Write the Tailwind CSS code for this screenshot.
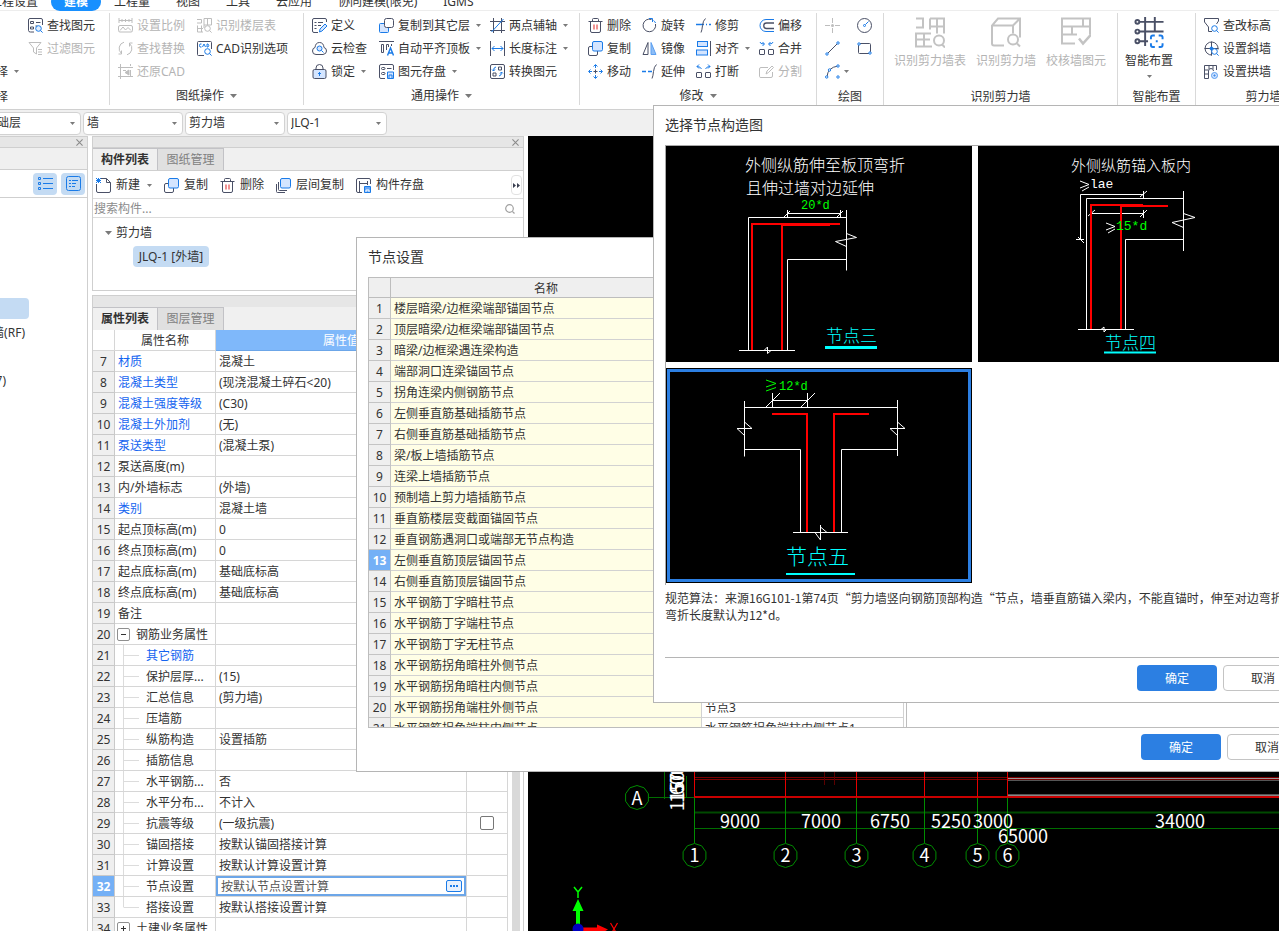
<!DOCTYPE html>
<html lang="zh-CN">
<head>
<meta charset="utf-8">
<title>建模</title>
<script src="https://cdn.jsdelivr.net/npm/@tailwindcss/browser@4"></script>
</head>
<body class="h-screen overflow-hidden bg-white font-['Noto_Sans','Noto_Sans_CJK_SC',sans-serif] text-xs leading-4 text-[#333]">

<svg class="hidden" aria-hidden="true">
  <defs>
    <g id="mag"><circle cx="10.5" cy="10.5" r="2.8"/><path d="M12.6 12.6l2 2"/></g>
  </defs>
  <symbol id="find" viewBox="0 0 15 15"><path d="M6 14H2.500Q.5 14 .5 12.500V2Q.5.5 2 .5H13Q14.500.5 14.500 2V7M2.500 3.500h3v2h-3zM8 4.500h4.500M2.500 9h3v2h-3zM7.500 8h2" fill="none" stroke="#4a5066"/><use href="#mag" fill="#e3efff" stroke="#1a7be8"/></symbol>
  <symbol id="filter" viewBox="0 0 15 15" fill="none" stroke="#bdbdbd"><path d="M1 1.500H13L8.500 7V13L5.500 11V7zM10 8.500h4M10 11h4M10 13.500h4"/></symbol>
  <symbol id="scale" viewBox="0 0 15 15" fill="none" stroke="#bdbdbd"><path d="M1 0V5M14 0V5M1 2.500H14M4 1v3M7.500 1v3M11 1v3M2 7.500h11q1.500 0 1.500 1.500v3.500q0 1.500-1.500 1.500H2Q.5 14 .5 12.500V9Q.5 7.500 2 7.500zM2 12.500l3-3.500 2.500 3L10 9.500l3 3"/></symbol>
  <symbol id="swap" viewBox="0 0 15 15" fill="none" stroke="#bdbdbd"><path d="M6 1.200A6.500 6.500 0 0 0 3.500 12.500M3.500 9.500v3.500H.5M9 13.800A6.500 6.500 0 0 0 11.500 2.500M11.500 5.500V2h3"/></symbol>
  <symbol id="restore" viewBox="0 0 15 15" fill="none" stroke="#bdbdbd"><path d="M2.500 0V15M0 3.500H15M0 12.500H15M12.500 0v2M12.500 6v6M5 6.500h3"/><path d="M11 6v5L7 8.500z" fill="#bdbdbd"/></symbol>
  <symbol id="floor" viewBox="0 0 15 15" fill="none" stroke="#bdbdbd"><path d="M0 1.500H4.500V5H0M7 .5h7.500V7H7zM10.500.5V7M.5 7.500V14H6M.5 10.500H6M4.500 7.500V14M7 7v3"/><use href="#mag"/></symbol>
  <symbol id="cad" viewBox="0 0 15 15"><path d="M7 14.500H1.500Q.5 14.500.5 13.500V1.500Q.5.5 1.500.5H13.500Q14.500.5 14.500 1.500V8" fill="none" stroke="#4a5066"/><path d="M4.500 3H3Q2 4.500 3 6H4.500M5.500 6L7 3 8.500 6M10 3v3h1Q12.500 4.500 11 3z" fill="none" stroke="#1a7be8"/><use href="#mag" fill="#fff" stroke="#1a7be8"/></symbol>
  <symbol id="define" viewBox="0 0 15 15" fill="none" stroke="#4a5066"><path d="M6 14.500H2Q.5 14.500.5 13V2Q.5.5 2 .5H13Q14.500.5 14.500 2V4M2.500 4.500h2M6 4.500h5M2.500 7.500h2M6 7.500h3M2.500 10.500h2"/><path d="M7.500 14l.5-3 5-5 2 2-5 5z" fill="#d4e5ff" stroke="#1a7be8"/></symbol>
  <symbol id="cloud" viewBox="0 0 15 15" fill="none" stroke="#4a5066"><path d="M4 13.500Q.5 13.500.5 10 .5 7 3 6.500 3.500 1.500 7.500 1.500T12 6.500Q14.500 7 14.500 10T11 13.500z"/><g stroke="#1a7be8"><circle cx="7.500" cy="7.500" r="2.500" fill="#d4e5ff"/><path d="M9.500 9.500l2 2"/></g></symbol>
  <symbol id="lock" viewBox="0 0 15 15" fill="none" stroke="#4a5066"><path d="M4 5.500V4a3.500 3.500 0 0 1 7 0V5.500"/><rect x="1" y="5.500" width="13" height="9" rx="1.500" fill="#d4e5ff"/><path d="M7.500 8v4M6 9.500h3" stroke="#1a7be8"/></symbol>
  <symbol id="copy" viewBox="0 0 15 15"><rect x=".5" y="5.500" width="9" height="9" rx="1.500" fill="#fff" stroke="#4a5066"/><rect x="4.500" y=".5" width="10" height="9.500" rx="1.500" fill="#d4e5ff" stroke="#1a7be8"/></symbol>
  <symbol id="copyup" viewBox="0 0 15 15"><rect x=".5" y="5.500" width="9" height="9" rx="1" fill="#d4e5ff" stroke="#1a7be8"/><rect x="5.500" y=".5" width="9" height="9" rx="2" fill="#fff" stroke="#4a5066"/></symbol>
  <symbol id="copylayer" viewBox="0 0 15 15" fill="none" stroke="#4a5066"><path d="M.5 6V13.500Q.5 14.500 1.500 14.500H9M2.500 4V11.500Q2.500 12.500 3.500 12.500H11"/><rect x="4.500" y=".5" width="10" height="9.500" rx="1.500" fill="#d4e5ff" stroke="#1a7be8"/></symbol>
  <symbol id="align" viewBox="0 0 15 15" fill="none" stroke="#4a5066"><path d="M0 .5H15M2.500 3.500h2V11.500h-2zM7.500 9V3.500h2V6M12.500 3v2"/><path d="M8.500 14.500L11.500 7l3 7.500M9.500 12h4" stroke="#1a7be8" stroke-width="1.400"/></symbol>
  <symbol id="store" viewBox="0 0 15 15" fill="none" stroke="#4a5066"><path d="M6 14.500H2Q.5 14.500.5 13V2Q.5.5 2 .5H13Q14.500.5 14.500 2V6M8 4.500h4.500"/><rect x="2.500" y="3.500" width="3.500" height="2" rx="1"/><rect x="2.500" y="8.500" width="3.500" height="2" rx="1"/><path d="M8.500 8h6v6.500h-6zM10 14v-3h3v3" stroke="#1a7be8" fill="#d4e5ff"/></symbol>
  <symbol id="axis" viewBox="0 0 15 15" fill="none" stroke="#4a5066"><path d="M3.500 0V15M0 3.500H15M0 12.500H15M11.500 0V15"/><path d="M1.500 14L13.500 1" stroke="#1a7be8"/></symbol>
  <symbol id="length" viewBox="0 0 15 15" fill="none" stroke="#4a5066"><path d="M.5 0V15M14.500 0V15"/><path d="M2 7.500H13M4.500 5L2 7.500 4.500 10M10.500 5L13 7.500 10.500 10" stroke="#1a7be8"/></symbol>
  <symbol id="convert" viewBox="0 0 15 15" fill="none" stroke="#4a5066"><rect x=".5" y=".5" width="14" height="14" rx="1.500"/><path d="M8.500 3h3v3h-3zM3 9h3v3H3z"/><path d="M6 3Q3.500 3 3.500 7M2 5.500L3.500 7 5 5.500M9 12q2.500 0 2.500-4M10 9.500L11.500 8 13 9.500" stroke="#1a7be8"/></symbol>
  <symbol id="trash" viewBox="0 0 15 15" fill="none" stroke="#4a5066"><path d="M.5 3.500h14M4.500 3.500V1.500Q4.500.5 5.500.5h4Q10.500.5 10.500 1.500V3.500M2.500 3.500V13Q2.500 14.500 4 14.500h7Q12.500 14.500 12.500 13V3.500"/><path d="M6 6.500v5M9 6.500v5" stroke="#e02424"/></symbol>
  <symbol id="move" viewBox="0 0 15 15" fill="none" stroke="#1a7be8"><path d="M5.500 2.500l2-2 2 2M5.500 12.500l2 2 2-2M2.500 5.500l-2 2 2 2M12.500 5.500l2 2-2 2M7.500 1v3M7.500 11v3M1 7.500h3M11 7.500h3"/><path d="M7.500 5.500v4M5.500 7.500h4" stroke="#4a5066"/></symbol>
  <symbol id="rotate" viewBox="0 0 15 15" fill="none" stroke="#4a5066"><path d="M9.500 1.500A6.300 6.300 0 1 0 13.500 6" /><path d="M7 .5h3.500V4M11.500 2.500q1.500 1 2 2.500" stroke="#1a7be8"/></symbol>
  <symbol id="mirror" viewBox="0 0 15 15"><path d="M6 1.500V13.500H1z" fill="#fff" stroke="#4a5066"/><path d="M9 1.500V13.500H14z" fill="#8dbdf7" stroke="#5b9ff0"/></symbol>
  <symbol id="extend" viewBox="0 0 15 15" fill="none" stroke="#1a7be8"><path d="M0 7.500h4M6 7.500h4" stroke-width="1.300"/><path d="M10 14.500q1-2 1.500-7T14.500.5" stroke="#4a5066"/></symbol>
  <symbol id="trim" viewBox="0 0 15 15" fill="none" stroke="#1a7be8"><path d="M0 6.500h8M10 6.500h1M13 6.500h2" stroke-width="1.300"/><path d="M5 14.500q1-2 1.500-7T9.500.5" stroke="#4a5066"/></symbol>
  <symbol id="alignr" viewBox="0 0 15 15"><rect x="1.500" y=".5" width="10" height="5" fill="#d4e5ff" stroke="#1a7be8"/><rect x=".5" y="9" width="11" height="5" fill="#d4e5ff" stroke="#1a7be8"/><path d="M14.500 0V15" stroke="#4a5066"/></symbol>
  <symbol id="break" viewBox="0 0 15 15" fill="none" stroke="#4a5066"><rect x=".5" y="8.500" width="5" height="5" rx=".5"/><rect x="9.500" y="8.500" width="5" height="5" rx=".5"/><path d="M5.500 5Q4.500 2.500 1 2.500M3 .5l-2 2 2 2M9.500 5q1-2.500 4.500-2.500M12 .5l2 2-2 2" stroke="#1a7be8"/></symbol>
  <symbol id="merge" viewBox="0 0 15 15" fill="none" stroke="#4a5066"><rect x=".5" y="8.500" width="5" height="5" rx=".5"/><rect x="9.500" y="8.500" width="5" height="5" rx=".5"/><path d="M1 1q0 2 4 2M3.500 1l2 2-2 2M14 1q0 2-4 2M11.500 1l-2 2 2 2" stroke="#1a7be8"/></symbol>
  <symbol id="offset" viewBox="0 0 15 15" fill="none"><path d="M15 1.500H7A6 6 0 0 0 7 13.500H15" stroke="#1a7be8"/><path d="M15 5H7.500a2.700 2.700 0 0 0 0 5.500H15" stroke="#4a5066" stroke-width="1.300"/></symbol>
  <symbol id="split" viewBox="0 0 15 15" fill="none" stroke="#bdbdbd"><path d="M9 3.500H2Q.5 3.500.5 5v7.500Q.5 13.500 2 13.500H12Q13.500 13.500 13.500 12V8M7 10l1-3 5-5 1.500 1.500-5 5z"/></symbol>
  <symbol id="point" viewBox="0 0 15 15"><path d="M7.500 0v5M7.500 10v5M0 7.500h5M10 7.500h5" stroke="#bdbdbd"/><circle cx="7.500" cy="7.500" r="1.500" fill="#bdbdbd"/></symbol>
  <symbol id="circle" viewBox="0 0 15 15" fill="none" stroke="#4a5066"><circle cx="7.500" cy="7.500" r="7"/><g stroke="#1a7be8"><circle cx="7.500" cy="7.500" r="1"/><path d="M8.500 6.500l3-3"/></g></symbol>
  <symbol id="line" viewBox="0 0 15 15" fill="none"><path d="M2 13L13 2" stroke="#4a5066"/><g stroke="#1a7be8" fill="#fff"><circle cx="2" cy="13" r="1.200"/><circle cx="13" cy="2" r="1.200"/></g></symbol>
  <symbol id="rect" viewBox="0 0 15 15" fill="none"><rect x="1.500" y="2.500" width="12" height="10" rx="1" stroke="#4a5066"/><g stroke="#1a7be8" fill="#fff"><circle cx="2" cy="3" r="1.200"/><circle cx="13" cy="12" r="1.200"/></g></symbol>
  <symbol id="arc" viewBox="0 0 15 15" fill="none"><path d="M2 13Q2.500 3.500 13 2" stroke="#4a5066"/><g stroke="#1a7be8" fill="#fff"><circle cx="1.700" cy="13" r="1.200"/><circle cx="4.500" cy="6" r="1.200"/><circle cx="13" cy="2" r="1.200"/><circle cx="13" cy="13" r="1.200"/></g></symbol>
  <symbol id="big1" viewBox="0 0 30 30" fill="none" stroke="#c3c3c3" stroke-width="2"><path d="M1 1H8V10H1M15 1H29V16M15 1V12M15 9H29M22 1V16M1 15V29H17M1 22H15M9 15V29M1 16H16"/><circle cx="24" cy="23" r="5"/><path d="M27 27l3 3"/></symbol>
  <symbol id="big2" viewBox="0 0 30 30" fill="none" stroke="#c3c3c3" stroke-width="2"><path d="M13 28H3Q1 28 1 26V8L7 1H29V20M1 8H22V16M22 8L29 1"/><circle cx="22" cy="22" r="5"/><path d="M26 26l3 3"/></symbol>
  <symbol id="big3" viewBox="0 0 30 30" fill="none" stroke="#c3c3c3" stroke-width="2"><path d="M14 26H1V1H29V17M1 9H29M1 17H16M22 1V9M11 9V17"/><path d="M18 21l4 5 8-9" stroke-width="2.500"/></symbol>
  <symbol id="big4" viewBox="0 0 30 32" fill="none" stroke="#4a5066" stroke-width="2"><path d="M5 5H30M5 15H30M5 25H14M11 0V30M21 0V15"/><g fill="#fff"><circle cx="3" cy="5" r="2"/><circle cx="3" cy="15" r="2"/><circle cx="3" cy="25" r="2"/></g><path d="M17 23V21Q17 19 19 19H21M25 19H27Q29 19 29 21V23M29 27V29Q29 31 27 31H25M21 31H19Q17 31 17 29V27M22 25h2" stroke="#1a7be8"/></symbol>
  <symbol id="elev" viewBox="0 0 15 15" fill="none" stroke="#4a5066"><path d="M8 13.500H4.500V9L.5 4V.5H14.500V3L12.500 6"/><use href="#mag" stroke="#1a7be8"/></symbol>
  <symbol id="slope" viewBox="0 0 15 15" fill="none" stroke="#4a5066"><path d="M14 8.500A6.500 6.500 0 1 0 8 14M.5 7.500h14M7.500.5v14"/><circle cx="7.500" cy="7.500" r="1.500" fill="#1a7be8" stroke="#1a7be8"/><use href="#mag" fill="#fff" stroke="#1a7be8"/></symbol>
  <symbol id="arch" viewBox="0 0 15 15" fill="none" stroke="#4a5066"><path d="M.5 14.500V1.500H12.500V6M.5 14.500H4.500V7Q4.500 4.500 7 4.500T9.500 7M.5 6h4M.5 10h4M5 1.500V5M9 1.500V5"/><circle cx="10.500" cy="11.500" r="3" fill="#cfe2ff" stroke="#5b9ff0"/><circle cx="10.500" cy="11.500" r=".6" stroke="#1a7be8"/></symbol>
  <symbol id="new" viewBox="0 0 15 15" fill="none"><path d="M5 .5H10.500L14.500 4.500V13Q14.500 14.500 13 14.500H2Q.5 14.500.5 13V6M10.500.5V4.500H14.500" stroke="#4a5066"/><path d="M0 0l5 5M5 0L0 5M2.500 0v5M0 2.500h5" stroke="#1a7be8"/></symbol>
  <symbol id="compstore" viewBox="0 0 15 15" fill="none" stroke="#4a5066"><path d="M6 14.500H2Q.5 14.500.5 13V2Q.5.5 2 .5H13Q14.500.5 14.500 2V6M3.500 3V14M11.500 3V7M3.500 5.500h8"/><path d="M8.500 8.500h6v6h-6z" fill="#6aa8f5" stroke="#1a7be8"/><path d="M10 14v-2h3v2" stroke="#fff"/></symbol>
  <symbol id="caret" viewBox="0 0 7 4"><path d="M0 0H7L3.500 4z" fill="#7a7a7a"/></symbol>
  <symbol id="close" viewBox="0 0 8 8"><path d="M.5.5l7 7M7.500.5l-7 7" stroke="#8a8a8a" stroke-width="1.200"/></symbol>
</svg>

<div class="relative flex h-full flex-col overflow-hidden">
  <nav class="flex h-[11px] shrink-0 items-end overflow-hidden whitespace-nowrap shadow-[inset_0_-1px_#ededed]">
    <div class="-ml-[23px] flex">
      <a href="#" class="h-[18px] px-[13px] leading-[18px]">工程设置</a>
      <a href="#" class="h-[18px] rounded-full bg-[#1890ff] px-[13px] font-bold leading-[18px] text-white">建模</a>
      <a href="#" class="h-[18px] px-[13px] leading-[18px]">工程量</a>
      <a href="#" class="h-[18px] px-[13px] leading-[18px]">视图</a>
      <a href="#" class="h-[18px] px-[13px] leading-[18px]">工具</a>
      <a href="#" class="h-[18px] px-[13px] leading-[18px]">云应用</a>
      <a href="#" class="h-[18px] px-[13px] leading-[18px]">协同建模(限免)</a>
      <a href="#" class="h-[18px] px-[13px] leading-[18px]">IGMS</a>
    </div>
  </nav>

  <div id="ribbon" class="flex h-[99px] shrink-0 border-b border-[#d0d0d0] pt-[2px] whitespace-nowrap"></div>

  <div class="flex h-[26px] shrink-0 items-center gap-0.5 bg-[#f0f0f0]">
    <div id="selectors" class="-ml-[19px] flex gap-0.5"></div>
  </div>

  <main class="flex min-h-0 flex-1 gap-1 bg-white">
    <aside class="flex w-[88px] shrink-0 flex-col overflow-hidden border-r border-[#cfcfcf]">
      <div class="flex h-3 items-center justify-end border-y border-[#cfcfcf] bg-[#e6e6e6] pr-1"><button aria-label="关闭"><svg class="size-[7px]"><use href="#close"/></svg></button></div>
      <div class="h-[22px] border-b border-[#cfcfcf] bg-[#f0f0f0]"></div>
      <div class="flex h-7 items-center justify-end gap-1 border-b border-[#cfcfcf] pr-0.5">
        <button aria-label="列表" class="grid h-[22px] w-6 place-items-center rounded bg-[#c4dbf3]"><svg class="size-[15px]" viewBox="0 0 15 15" fill="none" stroke="#1a7be8"><path d="M5 2.500h10M5 7.500h10M5 12.500h10"/><path d="M.5 1.500h2v2h-2zM.5 6.500h2v2h-2zM.5 11.500h2v2h-2z"/></svg></button>
        <button aria-label="详情" class="grid h-[22px] w-6 place-items-center rounded bg-[#c4dbf3]"><svg class="size-[15px]" viewBox="0 0 15 15" fill="none" stroke="#1a7be8"><rect x=".5" y=".5" width="14" height="14" rx="2"/><path d="M3 4.500h2M6 4.500h6M3 7.500h2M6 7.500h4M3 10.500h2M6 10.500h3"/></svg></button>
      </div>
      <div class="mt-[100px] h-[21px] w-[29px] rounded-r bg-[#c4dbf3]"></div>
      <div class="mt-1.5 flex h-4 w-[25px] justify-end whitespace-nowrap">墙(RF)</div>
      <div class="mt-8 flex h-4 w-[6px] justify-end whitespace-nowrap">7)</div>
    </aside>

    <div class="flex w-[432px] shrink-0 flex-col gap-1">
      <section class="flex h-[155px] shrink-0 flex-col border border-[#cfcfcf]">
        <div class="flex h-[11px] shrink-0 items-center justify-end border-b border-[#cfcfcf] bg-[#e6e6e6] pr-1"><button aria-label="关闭"><svg class="size-[7px]"><use href="#close"/></svg></button></div>
        <div class="flex h-[23px] shrink-0 border-b border-[#cfcfcf] bg-[#f0f0f0]">
          <button class="w-[65px] border-r border-t border-[#c2c2c6] font-bold">构件列表</button>
          <button class="w-[66px] border-r border-t border-[#c2c2c6] bg-[#e0e0e0] text-[#808080]">图纸管理</button>
        </div>
        <div class="flex h-7 shrink-0 items-center gap-3 border-b border-[#dcdcdc] pt-px pl-[3px] whitespace-nowrap">
          <button class="flex items-center gap-[5px]"><svg class="size-[15px]"><use href="#new"/></svg>新建<svg class="ml-0.5 h-[3px] w-[5px]"><use href="#caret"/></svg></button>
          <button class="flex items-center gap-[5px]"><svg class="size-[15px]"><use href="#copy"/></svg>复制</button>
          <button class="flex items-center gap-[5px]"><svg class="size-[15px]"><use href="#trash"/></svg>删除</button>
          <button class="flex items-center gap-[5px]"><svg class="size-[15px]"><use href="#copylayer"/></svg>层间复制</button>
          <button class="flex items-center gap-[5px]"><svg class="size-[15px]"><use href="#compstore"/></svg>构件存盘</button>
          <button aria-label="更多" class="mr-px ml-auto grid h-5 w-[11px] place-items-center rounded border border-[#e2e2e2]"><svg class="h-[5px] w-[7px]" viewBox="0 0 7 5" fill="#3a3f50"><path d="M0 0l3 2.500L0 5zM4 0l3 2.500L4 5z"/></svg></button>
        </div>
        <label class="flex h-[19px] shrink-0 items-center border-b border-[#dcdcdc] pt-px pr-2 pl-px">
          <input type="search" aria-label="搜索构件" placeholder="搜索构件..." class="min-w-0 flex-1 outline-none placeholder:text-[#8c8c8c]">
          <svg class="size-[10px]" viewBox="0 0 10 10" fill="none" stroke="#a0a0a0" stroke-width="1.200"><circle cx="4.500" cy="4.500" r="3.800"/><path d="M7.300 7.300L9.500 9.500"/></svg>
        </label>
        <div class="pt-[7px] pl-3">
          <div class="flex h-4 items-center gap-1"><svg class="h-1 w-[7px]"><use href="#caret"/></svg>剪力墙</div>
          <button class="mt-[5px] ml-7 h-[21px] w-[76px] rounded bg-[#c4dbf3] whitespace-nowrap">JLQ-1 [外墙]</button>
        </div>
      </section>

      <section class="flex min-h-0 flex-1 flex-col border-x border-t border-[#cfcfcf]">
        <div class="h-[11px] shrink-0 bg-[#e6e6e6]"></div>
        <div class="flex h-[23px] shrink-0 bg-[#f0f0f0]">
          <button class="w-[65px] border-r border-t border-[#c2c2c6] font-bold">属性列表</button>
          <button class="w-[66px] border-r border-t border-[#c2c2c6] bg-[#e0e0e0] text-[#808080]">图层管理</button>
        </div>
        <div class="flex min-h-0 flex-1 overflow-hidden">
          <table class="w-[415px] table-fixed border-separate border-spacing-0 self-start">
            <colgroup><col class="w-[22px]"><col class="w-[101px]"><col class="w-[251px]"><col class="w-[41px]"></colgroup>
            <thead><tr class="h-[21px]">
              <th class="border-r border-b border-[#d6d6d6] p-0"></th>
              <th class="border-r border-b border-[#d6d6d6] p-0 pt-[2px] font-normal">属性名称</th>
              <th class="border-r border-b border-[#6ca6e8] bg-[#7fb8fa] p-0 pt-[2px] font-normal text-white">属性值</th>
              <th class="border-r border-b border-[#d6d6d6] p-0 pt-[2px] font-normal">附加</th>
            </tr></thead>
            <tbody id="props"></tbody>
          </table>
          <div class="flex flex-1 justify-center bg-white"><div class="h-full w-2 bg-[#d9d9d9]"></div></div>
        </div>
      </section>
    </div>

    <div class="min-w-0 flex-1 overflow-hidden bg-black">
      <svg class="h-full w-full" aria-label="模型视图">
        <g transform="translate(-528 -136)" fill="none">
          <path d="M694 777.500H2000M694 779.500H2000" stroke="#7a0000"/>
          <path d="M1008 778.500H2000" stroke="#999" />
          <path d="M1008 780.500H2000" stroke="#555"/>
          <path d="M1008 794.500H2000" stroke="#555"/><path d="M1008 795.500H2000" stroke="#888"/>
          <path d="M824.500 765V785M834.500 765V785" stroke="#5a0000"/>
          <path d="M694 797H2000" stroke="#c80000" stroke-width="2"/>
          <path d="M694.500 765V797M785.500 765V797M856.500 765V797M924.500 765V797M977.500 765V797M1007.500 765V797" stroke="#e60000"/>
          <path d="M694 812.500H2000" stroke="#004a00" stroke-width="2"/>
          <path d="M694 828.500H2000M664.500 765V799M686.500 776V797M649 797.500H694" stroke="#006e00"/>
          <path d="M694.500 798V843M785.500 798V843M856.500 798V843M924.500 798V843M977.500 798V843M1007.500 798V843" stroke="#008c00"/>
          <g id="bubbles" stroke="#008c00"></g>
          <g fill="#fff" font-family="Noto Sans CJK SC, sans-serif" font-size="18" text-anchor="middle">
            <text x="637" y="805">A</text>
            <text x="694.500" y="862">1</text><text x="785.500" y="862">2</text><text x="856.500" y="862">3</text><text x="924.500" y="862">4</text><text x="977.500" y="862">5</text><text x="1007.500" y="862">6</text>
            <text x="740" y="828">9000</text><text x="821" y="828">7000</text><text x="890" y="828">6750</text><text x="951" y="828">5250</text><text x="993" y="828">3000</text><text x="1180" y="828">34000</text><text x="1023" y="843">65000</text>
            <g text-anchor="start"><text transform="translate(684 811) rotate(-90)">11500</text><text transform="translate(684 803) rotate(-90)">15700</text><text transform="translate(684 795) rotate(-90)">6000</text></g>
          </g>
          <path d="M578 899l5.500 12h-11zM576 911h4v14h-4z" fill="#0f0"/>
          <path d="M608 929.500l-11-5v11zM583 927.500h14v5h-14z" fill="#f00"/>
          <circle cx="578" cy="929" r="5.500" fill="#0000c0"/>
          <path d="M574 887l4 5 4-5M578 892v6" stroke="#0f0" stroke-width="1.500"/>
          <path d="M610.500 923l7 12M617.500 923l-7 12" stroke="#f00" stroke-width="1.200"/>
        </g>
      </svg>
    </div>
  </main>

  <section role="dialog" aria-label="节点设置" class="absolute top-[237px] -right-[40px] left-[356px] flex h-[535px] flex-col border border-[#b5b5b5] bg-white px-[11px]">
    <h2 class="flex h-[39px] shrink-0 items-center pb-[2px] text-sm">节点设置</h2>
    <div class="flex h-[451px] shrink-0 overflow-hidden border border-[#bdbdbd]">
      <table class="w-[535px] table-fixed border-separate border-spacing-0 self-start">
        <colgroup><col class="w-[22px]"><col class="w-[311px]"><col class="w-[202px]"></colgroup>
        <thead><tr class="h-5 bg-[#efefef]">
          <th class="border-r border-b border-[#bdbdbd] p-0"></th>
          <th class="border-r border-b border-[#bdbdbd] p-0 pt-[2px] font-normal">名称</th>
          <th class="border-r border-b border-[#bdbdbd] p-0 pt-[2px] font-normal">节点图</th>
        </tr></thead>
        <tbody id="nodes"></tbody>
      </table>
      <div class="ml-[2px] flex-1 border-l border-[#bdbdbd]"></div>
    </div>
    <div class="flex justify-end gap-1.5 pt-1.5">
      <button class="h-[26px] w-20 rounded bg-[#2c7fe2] pt-[2px] text-white">确定</button>
      <button class="h-[26px] w-20 rounded border border-[#c4c4c4] bg-white pt-[2px]">取消</button>
    </div>
  </section>

  <section role="dialog" aria-label="选择节点构造图" class="absolute top-[105px] -right-[36px] left-[653px] flex h-[598px] flex-col border border-[#b5b5b5] bg-white px-[11px]">
    <h2 class="flex h-[39px] shrink-0 items-center pb-[2px] text-sm">选择节点构造图</h2>
    <div class="flex h-[440px] shrink-0 flex-wrap content-start gap-x-1.5 gap-y-1.5 border-t border-l border-[#a8a8a8]">
      <button class="h-[216px] w-[306px] bg-black" aria-label="节点三">
        <svg class="block h-[216px] w-[306px]" viewBox="0 0 306 216" fill="none" stroke="#fff">
          <path d="M82.500 204.500V71.500H180.500M180.500 64V124.500M121.500 204.500V113.500H180.500M180.500 87.500L190.500 91.500 169.500 95.500 180.500 100.500M121.500 67.500H174.500M121.500 64V71M174.500 64V71M118 71L124 65M171 71L177 65M73 204.500H129M98 204.500L101.500 201V207.500L105 204.500"/>
          <path d="M86 204V78H174M116 204V79H164" stroke="#f00" stroke-width="2"/>
          <path d="M159 201.500H211" stroke="#0ff" stroke-width="3"/>
          <g stroke="none" fill="#fff" font-family="Noto Sans CJK SC, sans-serif" font-size="16" font-weight="300"><text x="79" y="25">外侧纵筋伸至板顶弯折</text><text x="80" y="48">且伸过墙对边延伸</text>
          <text x="160" y="196" font-size="17" fill="#0ff">节点三</text><text x="135" y="63" fill="#0f0" font-size="12" font-family="Liberation Mono, monospace">20*d</text></g>
        </svg>
      </button>
      <button class="h-[216px] w-[306px] bg-black" aria-label="节点四">
        <svg class="block h-[216px] w-[306px]" viewBox="0 0 306 216" fill="none" stroke="#fff">
          <path d="M108.500 183.500V52.500H205.500M205.500 45V105M147.500 183.500V93.500H205.500M205.500 67.500L217 71.500 194 76.500 205.500 81.500M165.500 48.500H102.500V93.500M165.500 45V52M162 51L169 45M98 93.500H106M100 91L106 97M113 67.500H166M165.500 64V72M162 71L169 64M110 70L117 64M100 183.500H156M123 183.500L126 181V186L129 183"/>
          <path d="M113 183V59H165M143 183V60H190" stroke="#f00" stroke-width="2"/>
          <path d="M126 206.500H178" stroke="#0ff" stroke-width="2"/>
          <g stroke="none" fill="#fff" font-family="Noto Sans CJK SC, sans-serif" font-size="15" font-weight="300"><text x="93" y="25">外侧纵筋锚入板内</text><text x="127" y="203" font-size="17" fill="#0ff">节点四</text></g>
          <g stroke="none" fill="#fff" font-family="Liberation Mono, monospace" font-size="13"><text x="112" y="42">lae</text><text x="138" y="84" fill="#0f0">15*d</text></g>
          <path d="M102 35L111 38.500 102 42M104 45L111 41M128 77L137 80.500 128 84M130 87L137 83"/>
        </svg>
      </button>
      <button class="h-[215px] w-[306px] border border-black bg-black" aria-label="节点五" aria-pressed="true">
        <svg class="block h-[213px] w-[304px] border-[3px] border-[#2c7fe2]" viewBox="4 4 298 207" fill="none" stroke="#fff">
          <path d="M78.500 39.500H231.500M78.500 33V88.500M231.500 32V88M78.500 81.500H134.500V164.500M231.500 81.500H175.500V164.500M78.500 54L86 60.500H71L78.500 67.500M231.500 54L239 60.500H224L231.500 67.500M127 164.500H182M154.500 157V172L149 164.500M154.500 159L161 164.500M106.500 25V39M141.500 25V39M106.500 32.500H141.500M100 39L114 25M135 39L149 25"/>
          <path d="M106 46H141V164M203 46H168V164" stroke="#f00" stroke-width="2"/>
          <path d="M120 206H189" stroke="#0ff" stroke-width="2"/>
          <g stroke="none" font-family="Liberation Mono, monospace"><text x="113" y="22" fill="#0f0" font-size="12">12*d</text><text x="120" y="196" font-size="21" font-weight="300" fill="#0ff" font-family="Noto Sans CJK SC, sans-serif">节点五</text></g>
          <path d="M100 12L110 15.500 100 19M100 23L110 19.500" stroke="#0f0"/>
        </svg>
      </button>
    </div>
    <p class="h-[73px] shrink-0 overflow-hidden border-b border-[#b5b5b5] pt-1 font-['Noto_Sans_CJK_SC',sans-serif] leading-[17px] whitespace-nowrap">规范算法：来源16G101-1第74页“剪力墙竖向钢筋顶部构造“节点，墙垂直筋锚入梁内，不能直锚时，伸至对边弯折，<br>弯折长度默认为12*d。</p>
    <div class="flex justify-end gap-1.5 pt-[7px]">
      <button class="h-[26px] w-20 rounded bg-[#2c7fe2] pt-[2px] text-white">确定</button>
      <button class="h-[26px] w-20 rounded border border-[#c4c4c4] bg-white pt-[2px]">取消</button>
    </div>
  </section>
</div>

<script>
const caret = '<svg class="ml-0.5 h-[3px] w-[5px]"><use href="#caret"/></svg>';
const icon = id => `<svg class="size-[15px] shrink-0"><use href="#${id}"/></svg>`;
// Item: [icon, label, options]; options: d = disabled, c = has a caret, i = icon only
const item = ([id, label, opt = '']) =>
  `<button aria-label="${label}" class="flex h-[23px] items-center gap-1 ${opt.includes('d') ? 'text-[#b4b4b4]' : ''}" ${opt.includes('d') ? 'disabled' : ''}>${id ? icon(id) : ''}${opt.includes('i') ? '' : label}${opt.includes('c') ? (opt.includes('i') ? '<svg class="h-[3px] w-[5px]"><use href="#caret"/></svg>' : caret) : ''}</button>`;
const col = (cls, items) => `<div class="flex shrink-0 flex-col ${cls}">${items.map(item).join('')}</div>`;
const big = (cls, id, label, disabled) =>
  `<button class="flex shrink-0 flex-col items-center pt-[3px] ${cls} ${disabled ? 'text-[#b4b4b4]' : ''}" ${disabled ? 'disabled' : ''}><svg class="h-[31px] w-[30px]"><use href="#${id}"/></svg><span class="mt-[5px]">${label}</span>${disabled ? '' : '<svg class="mt-1.5 h-[3px] w-[5px]"><use href="#caret"/></svg>'}</button>`;
const group = (cls, body, label, hasCaret) =>
  `<div class="flex h-[92px] shrink-0 flex-col border-r border-[#d9d9d9] pt-px ${cls}"><div class="flex h-[69px] pl-2">${body}</div><div class="flex items-center justify-center gap-1.5 ${hasCaret ? 'pt-[5px]' : 'pt-1.5'}">${label}${hasCaret ? '<svg class="h-1 w-[7px]"><use href="#caret"/></svg>' : ''}</div></div>`;

document.getElementById('ribbon').innerHTML =
  `<div class="flex h-[92px] w-[110px] shrink-0 flex-col overflow-hidden border-r border-[#d9d9d9] pt-px"><div class="flex h-[69px]"><div class="-ml-[16px] flex w-[44px] flex-col justify-end">${item(['', '选择', 'c'])}</div>${col('', [['find', '查找图元'], ['filter', '过滤图元', 'd']])}</div><div class="-ml-[16px] pt-1.5">选择</div></div>` +
  group('w-[194px]', col('w-[79px]', [['scale', '设置比例', 'd'], ['swap', '查找替换', 'd'], ['restore', '还原CAD', 'd']]) + col('', [['floor', '识别楼层表', 'd'], ['cad', 'CAD识别选项']]), '图纸操作', true) +
  group('w-[276px]', col('w-[67px]', [['define', '定义'], ['cloud', '云检查'], ['lock', '锁定', 'c']]) + col('w-[111px]', [['copyup', '复制到其它层', 'c'], ['align', '自动平齐顶板', 'c'], ['store', '图元存盘', 'c']]) + col('', [['axis', '两点辅轴', 'c'], ['length', '长度标注', 'c'], ['convert', '转换图元']]), '通用操作', true) +
  group('w-[237px]', col('w-[54px]', [['trash', '删除'], ['copy', '复制'], ['move', '移动']]) + col('w-[54px]', [['rotate', '旋转'], ['mirror', '镜像'], ['extend', '延伸']]) + col('w-[63px]', [['trim', '修剪'], ['alignr', '对齐', 'c'], ['break', '打断']]) + col('', [['offset', '偏移'], ['merge', '合并'], ['split', '分割', 'd']]), '修改', true) +
  group('w-[67px]', col('w-8', [['point', '点', 'id'], ['line', '直线', 'i'], ['arc', '弧', 'ic']]) + col('', [['circle', '圆', 'i'], ['rect', '矩形', 'i']]), '绘图') +
  group('w-[234px]', big('ml-0.5 w-[72px]', 'big1', '识别剪力墙表', true) + big('ml-[10px] w-[60px]', 'big2', '识别剪力墙', true) + big('ml-[10px] w-[60px]', 'big3', '校核墙图元', true), '识别剪力墙') +
  group('w-[78px]', big('-ml-px w-12', 'big4', '智能布置'), '智能布置') +
  group('w-[184px]', col('', [['elev', '查改标高'], ['slope', '设置斜墙'], ['arch', '设置拱墙']]), '剪力墙二次编辑');

document.getElementById('selectors').innerHTML = ['基础层', '墙', '剪力墙', 'JLQ-1'].map(t =>
  `<label class="relative block"><select aria-label="${t}" class="block h-[23px] w-[100px] appearance-none rounded border border-[#d2d2d2] bg-white pl-[3px]"><option>${t}</option></select><svg class="pointer-events-none absolute top-[10px] right-[6px] h-[3px] w-[5px]"><use href="#caret"/></svg></label>`).join('');

// Property row: [name, value, kind]; b = blue name, t = child row, g+ / g- = group header
const props = [['材质', '混凝土', 'b'], ['混凝土类型', '(现浇混凝土碎石<20)', 'b'], ['混凝土强度等级', '(C30)', 'b'], ['混凝土外加剂', '(无)', 'b'], ['泵送类型', '(混凝土泵)', 'b'], ['泵送高度(m)', ''], ['内/外墙标志', '(外墙)'], ['类别', '混凝土墙', 'b'], ['起点顶标高(m)', '0'], ['终点顶标高(m)', '0'], ['起点底标高(m)', '基础底标高'], ['终点底标高(m)', '基础底标高'], ['备注', ''], ['钢筋业务属性', '', 'g-'], ['其它钢筋', '', 'tb'], ['保护层厚...', '(15)', 't'], ['汇总信息', '(剪力墙)', 't'], ['压墙筋', '', 't'], ['纵筋构造', '设置插筋', 't'], ['插筋信息', '', 't'], ['水平钢筋...', '否', 't'], ['水平分布...', '不计入', 't'], ['抗震等级', '(一级抗震)', 't'], ['锚固搭接', '按默认锚固搭接计算', 't'], ['计算设置', '按默认计算设置计算', 't'], ['节点设置', '按默认节点设置计算', 't'], ['搭接设置', '按默认搭接设置计算', 't'], ['土建业务属性', '', 'g+']];
document.getElementById('props').innerHTML = props.map(([name, value, kind = ''], i) => {
  const n = i + 7, sel = n === 32, child = kind.includes('t');
  const label = value.replace('<', '&lt;');
  const first = kind[0] === 'g'
    ? `<div class="flex items-center gap-1.5 pl-0.5"><button class="grid size-[13px] place-items-center rounded-xs border border-[#8f8f8f] leading-[10px]" aria-label="展开">${kind[1] === '-' ? '<svg class="size-[5px]" viewBox="0 0 5 5" stroke="#333"><path d="M0 2.500h5"/></svg>' : '<svg class="size-[5px]" viewBox="0 0 5 5" stroke="#333"><path d="M0 2.500h5M2.500 0v5"/></svg>'}</button><span class="pt-[2px]">${name}</span></div>`
    : child
    ? `<div class="flex h-5 items-center gap-1.5"><svg class="ml-2 h-5 w-[17px]" viewBox="0 0 17 20" fill="none" stroke="#dcdcdc"><path d="M.5 0V${n === 33 ? 10 : 20}M.5 10.500H16"/></svg><span class="pt-[2px] ${kind.includes('b') ? 'text-[#1464f0]' : ''}">${name}</span></div>`
    : `<div class="pt-[2px] pl-[3px] ${kind === 'b' ? 'text-[#1464f0]' : ''}">${name}</div>`;
  return `<tr class="h-[21px] whitespace-nowrap">
    <td class="border-r border-b border-[#c9c9c9] p-0 pt-[2px] text-center ${sel ? 'bg-[#74b0f6] font-bold text-white' : 'bg-[#efefef]'}">${n}</td>
    <td class="overflow-hidden border-r border-b border-[#d6d6d6] p-0">${first}</td>
    <td class="border-r border-b border-[#d6d6d6] p-0 ${sel ? '' : 'pt-[2px] pl-[3px]'}">${sel ? `<div class="flex h-5 items-center border-2 border-[#6ca6e8] pr-0.5 pl-[3px]"><input aria-label="${name}" value="${label}" class="min-w-0 flex-1 pt-px text-[#555] outline-none"><button aria-label="更多" class="grid h-3 w-4 place-items-center rounded-xs border border-[#1a7be8] bg-[#e8f1fd]"><svg class="h-[2px] w-[8px]" viewBox="0 0 8 2" fill="#1a7be8"><path d="M0 0h2v2H0zM3 0h2v2H3zM6 0h2v2H6z"/></svg></button></div>` : label}</td>
    <td class="border-r border-b border-[#d6d6d6] p-0 text-center">${n === 29 ? '<input type="checkbox" aria-label="抗震等级附加" class="block mx-auto size-[14px] appearance-none rounded-xs border border-[#777] bg-white">' : ''}</td></tr>`;
}).join('');

const nodes = ['楼层暗梁/边框梁端部锚固节点', '顶层暗梁/边框梁端部锚固节点', '暗梁/边框梁遇连梁构造', '端部洞口连梁锚固节点', '拐角连梁内侧钢筋节点', '左侧垂直筋基础插筋节点', '右侧垂直筋基础插筋节点', '梁/板上墙插筋节点', '连梁上墙插筋节点', '预制墙上剪力墙插筋节点', '垂直筋楼层变截面锚固节点', '垂直钢筋遇洞口或端部无节点构造', '左侧垂直筋顶层锚固节点', '右侧垂直筋顶层锚固节点', '水平钢筋丁字暗柱节点', '水平钢筋丁字端柱节点', '水平钢筋丁字无柱节点', '水平钢筋拐角暗柱外侧节点', '水平钢筋拐角暗柱内侧节点', '水平钢筋拐角端柱外侧节点', '水平钢筋拐角端柱内侧节点'];
const nodeValues = { 20: '节点3', 21: '水平钢筋拐角端柱内侧节点1' };
document.getElementById('nodes').innerHTML = nodes.map((name, i) =>
  `<tr class="h-[21px] whitespace-nowrap"><td class="border-r border-b border-[#c4c4c4] p-0 pt-[2px] text-center ${i === 12 ? 'bg-[#74b0f6] font-bold text-white' : 'bg-[#efefef]'}">${i + 1}</td><td class="border-r border-b border-[#d2d2d2] bg-[#fffee6] p-0 pt-[2px] pl-[3px]">${name}</td><td class="border-r border-b border-[#d2d2d2] p-0 pt-[2px] pl-[3px]">${nodeValues[i + 1] || ''}</td></tr>`).join('');

// Ten-sided axis markers
document.getElementById('bubbles').innerHTML = [[637, 797.5], [694.5, 855.5], [785.5, 855.5], [856.5, 855.5], [924.5, 855.5], [977.5, 855.5], [1007.5, 855.5]].map(([x, y]) =>
  `<polygon points="${Array.from({ length: 10 }, (_, k) => [x + 12 * Math.sin(k * Math.PI / 5), y - 12 * Math.cos(k * Math.PI / 5)].map(v => v.toFixed(1)).join(',')).join(' ')}"/>`).join('');
</script>
</body>
</html>
